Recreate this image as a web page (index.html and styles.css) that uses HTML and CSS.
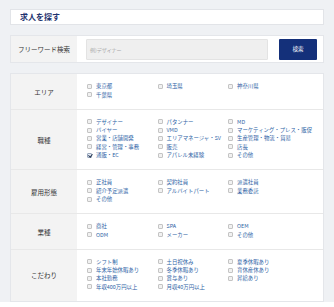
FILE: index.html
```html
<!DOCTYPE html>
<html lang="ja">
<head>
<meta charset="utf-8">
<link rel="stylesheet" href="styles.css">
</head>
<body>
<div class="wrap">
  <div class="title">求人を探す</div>

  <div class="box free">
    <div class="label">フリーワード検索</div>
    <div class="free-body">
      <div class="input">例)デザイナー</div>
      <div class="btn">検索</div>
    </div>
  </div>

  <div class="box table">
    <div class="row">
      <div class="label">エリア</div>
      <div class="items">
        <span class="it"><i class="cb"></i>東京都</span>
        <span class="it"><i class="cb"></i>埼玉県</span>
        <span class="it"><i class="cb"></i>神奈川県</span>
        <span class="it"><i class="cb"></i>千葉県</span>
      </div>
    </div>
    <div class="row">
      <div class="label">職種</div>
      <div class="items">
        <span class="it"><i class="cb"></i>デザイナー</span>
        <span class="it"><i class="cb"></i>パタンナー</span>
        <span class="it"><i class="cb"></i>MD</span>
        <span class="it"><i class="cb"></i>バイヤー</span>
        <span class="it"><i class="cb"></i>VMD</span>
        <span class="it"><i class="cb"></i>マーケティング・プレス・販促</span>
        <span class="it"><i class="cb"></i>営業・店舗開発</span>
        <span class="it"><i class="cb"></i>エリアマネージャ・SV</span>
        <span class="it"><i class="cb"></i>生産管理・物流・貿易</span>
        <span class="it"><i class="cb"></i>経営・管理・事務</span>
        <span class="it"><i class="cb"></i>販売</span>
        <span class="it"><i class="cb"></i>店長</span>
        <span class="it"><i class="cb on"></i>通販・EC</span>
        <span class="it"><i class="cb"></i>アパレル未経験</span>
        <span class="it"><i class="cb"></i>その他</span>
      </div>
    </div>
    <div class="row">
      <div class="label">雇用形態</div>
      <div class="items">
        <span class="it"><i class="cb"></i>正社員</span>
        <span class="it"><i class="cb"></i>契約社員</span>
        <span class="it"><i class="cb"></i>派遣社員</span>
        <span class="it"><i class="cb"></i>紹介予定派遣</span>
        <span class="it"><i class="cb"></i>アルバイトパート</span>
        <span class="it"><i class="cb"></i>業務委託</span>
        <span class="it"><i class="cb"></i>その他</span>
      </div>
    </div>
    <div class="row">
      <div class="label">業種</div>
      <div class="items">
        <span class="it"><i class="cb"></i>商社</span>
        <span class="it"><i class="cb"></i>SPA</span>
        <span class="it"><i class="cb"></i>OEM</span>
        <span class="it"><i class="cb"></i>ODM</span>
        <span class="it"><i class="cb"></i>メーカー</span>
        <span class="it"><i class="cb"></i>その他</span>
      </div>
    </div>
    <div class="row">
      <div class="label">こだわり</div>
      <div class="items">
        <span class="it"><i class="cb"></i>シフト制</span>
        <span class="it"><i class="cb"></i>土日祝休み</span>
        <span class="it"><i class="cb"></i>夏季休暇あり</span>
        <span class="it"><i class="cb"></i>年末年始休暇あり</span>
        <span class="it"><i class="cb"></i>冬季休暇あり</span>
        <span class="it"><i class="cb"></i>育休産休あり</span>
        <span class="it"><i class="cb"></i>本社勤務</span>
        <span class="it"><i class="cb"></i>賞与あり</span>
        <span class="it"><i class="cb"></i>昇給あり</span>
        <span class="it"><i class="cb"></i>年収400万円以上</span>
        <span class="it"><i class="cb"></i>月収40万円以上</span>
      </div>
    </div>
  </div>
</div>
</body>
</html>
```

FILE: styles.css
```css
html, body {
  margin: 0;
  padding: 0;
  background: #ffffff;
}
body {
  font-family: "Noto Sans CJK JP", "Noto Sans", sans-serif;
  color: #333;
}
.wrap {
  background: #eff1f4;
  height: 302px;
  overflow: hidden;
  box-sizing: border-box;
  padding: 9px 10px 0;
  display: flex;
  flex-direction: column;
  gap: 10px;
}
.title {
  background: #fff;
  border: 1px solid #e2e4e8;
  height: 16px;
  box-sizing: border-box;
  padding-left: 9px;
  font-size: 8px;
  font-weight: bold;
  color: #1f3470;
  line-height: 14px;
}
.box {
  background: #fff;
  border: 1px solid #e4e6ea;
  box-sizing: border-box;
}
.label {
  background: #f3f3f3;
  font-size: 6.5px;
  color: #333;
  display: flex;
  align-items: center;
  justify-content: center;
}
.free {
  height: 40px;
  display: grid;
  grid-template-columns: 66px 1fr;
}
.free-body {
  display: flex;
  align-items: center;
  padding: 0 6px 0 9px;
  gap: 11px;
}
.input {
  width: 182px;
  height: 21px;
  box-sizing: border-box;
  background: #efefef;
  border: 1px solid #e3e3e3;
  border-radius: 1px;
  font-size: 5px;
  color: #a8a8a8;
  line-height: 19px;
  padding-left: 3px;
}
.btn {
  width: 38px;
  height: 21px;
  background: #14307a;
  border-radius: 1px;
  color: #fff;
  font-size: 5.5px;
  display: flex;
  align-items: center;
  justify-content: center;
}
.table {
  display: flex;
  flex-direction: column;
}
.row {
  display: grid;
  grid-template-columns: 66px 1fr;
  border-top: 1px solid #e8e8e8;
}
.row:first-child {
  border-top: none;
}
.items {
  display: grid;
  grid-template-columns: 70.5px 70.5px 1fr;
  align-content: start;
  padding: 8px 0 10px 10px;
}
.it {
  display: flex;
  align-items: center;
  font-size: 5.4px;
  line-height: 8.3px;
  height: 8.3px;
  color: #2f64a6;
  white-space: nowrap;
}
.cb {
  width: 5px;
  height: 5px;
  box-sizing: border-box;
  border: 1px solid #c4c4c4;
  background: #f1f1f1;
  border-radius: 1px;
  margin-right: 4px;
  flex: none;
  position: relative;
}
.cb.on {
  background: #e6edf7;
  border-color: #9aa8bd;
}
.cb.on::after {
  content: "";
  position: absolute;
  left: 0.6px;
  top: -0.6px;
  width: 1.5px;
  height: 3px;
  border-right: 1px solid #2a3a55;
  border-bottom: 1px solid #2a3a55;
  transform: rotate(40deg);
}
```
